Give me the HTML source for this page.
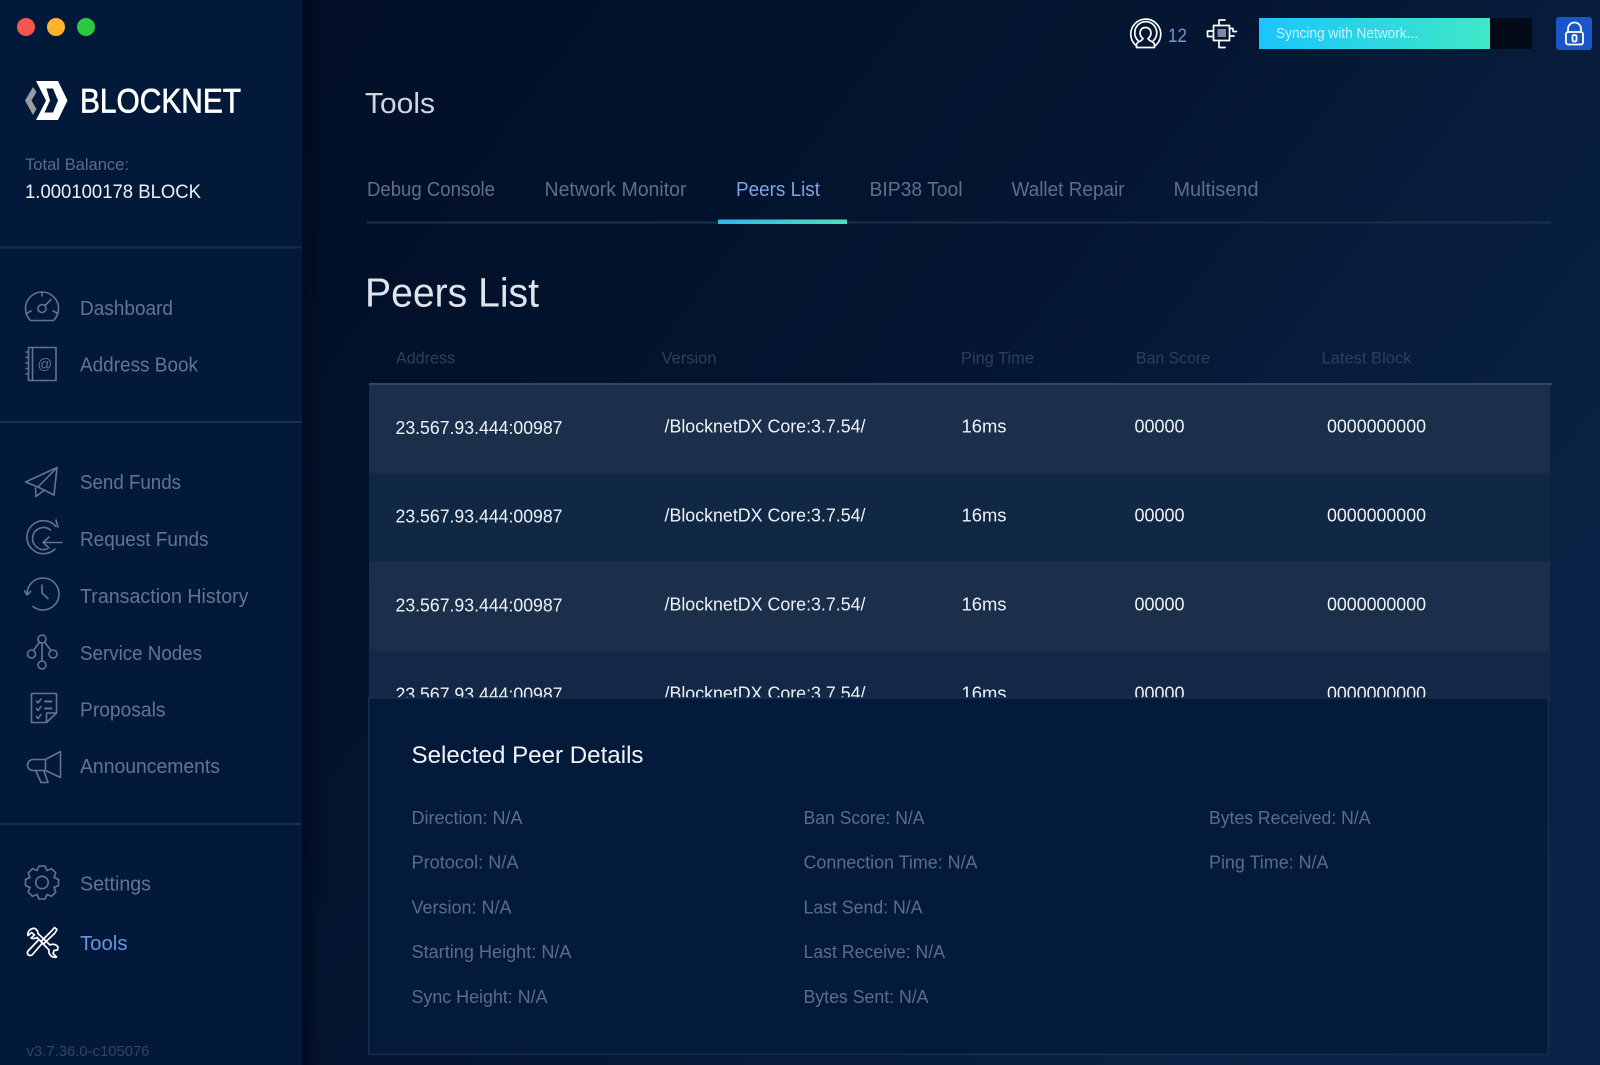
<!DOCTYPE html>
<html lang="en">
<head>
<meta charset="utf-8">
<title>Blocknet Peers List</title>
<style>
html,body{margin:0;padding:0;width:1600px;height:1065px;overflow:hidden;background:#020f28}
svg{display:block}
text{font-family:"Liberation Sans",sans-serif;white-space:pre}
.nav{font-size:20px;fill:#64748f}
.tab{font-size:20px;fill:#5f6e8a}
.th{font-size:16.5px;fill:#2f3f5b}
.td{font-size:18.5px;fill:#edf2f8}
.d{font-size:18.5px;fill:#5c6c88}
.i{fill:none;stroke:#64748f;stroke-width:1.6;stroke-linejoin:round;stroke-linecap:round}
.w{fill:none;stroke:#fff;stroke-width:1.7;stroke-linejoin:round;stroke-linecap:round}
</style>
</head>
<body>
<svg width="1600" height="1065" viewBox="0 0 1600 1065" xmlns="http://www.w3.org/2000/svg">
<defs>
<linearGradient id="bg" gradientUnits="userSpaceOnUse" x1="320" y1="60" x2="1560" y2="1000">
<stop offset="0" stop-color="#020f27"/><stop offset=".45" stop-color="#041632"/><stop offset=".8" stop-color="#0a2144"/><stop offset="1" stop-color="#0c2348"/>
</linearGradient>
<linearGradient id="sh" x1="0" x2="1" y1="0" y2="0">
<stop offset="0" stop-color="#000a1e" stop-opacity=".9"/><stop offset="1" stop-color="#000a1e" stop-opacity="0"/>
</linearGradient>
<linearGradient id="bar" gradientUnits="userSpaceOnUse" x1="1259" y1="0" x2="1490" y2="0">
<stop offset="0" stop-color="#1ac5fd"/><stop offset="1" stop-color="#3fe8c6"/>
</linearGradient>
<linearGradient id="ul" gradientUnits="userSpaceOnUse" x1="718" y1="0" x2="847" y2="0">
<stop offset="0" stop-color="#33b6ea"/><stop offset="1" stop-color="#4de0bd"/>
</linearGradient>
</defs>

<rect width="1600" height="1065" fill="url(#bg)"/>
<rect x="302" y="0" width="22" height="1065" fill="url(#sh)"/>
<rect x="0" y="0" width="302" height="1065" fill="#02193a"/>

<!-- traffic lights -->
<circle cx="26" cy="27" r="9" fill="#f5544f"/>
<circle cx="56" cy="27" r="9" fill="#fdb42c"/>
<circle cx="86" cy="27" r="9" fill="#2ec83f"/>

<!-- logo -->
<path d="M33 87 L36.5 92 L31.5 100.5 L36.5 109 L33 115 L25 100.5 Z" fill="#9b9ca2"/>
<path d="M36 81 H58 L67.5 100.5 L58 120 H36 L41 110.5 L46 100.5 L36 81 Z" fill="#fff"/>
<path d="M46.5 88.5 H53 L58 100.5 L53 112.5 H44.5 L50 100.5 Z" fill="#02193a"/>
<text x="80" y="112.5" font-size="34.5" fill="#fff" stroke="#fff" stroke-width=".7" textLength="161" lengthAdjust="spacingAndGlyphs">BLOCKNET</text>
<text x="25" y="170" font-size="16.5" fill="#5a6a88" textLength="104" lengthAdjust="spacingAndGlyphs">Total Balance:</text>
<text x="25" y="198" font-size="19.5" fill="#eef2f8" textLength="176" lengthAdjust="spacingAndGlyphs">1.000100178 BLOCK</text>

<rect x="0" y="246.5" width="302" height="2" fill="#16304f"/>
<rect x="0" y="421" width="302" height="2" fill="#16304f"/>
<rect x="0" y="823" width="302" height="2" fill="#16304f"/>

<!-- nav labels -->
<text class="nav" x="80" y="315" textLength="93" lengthAdjust="spacingAndGlyphs">Dashboard</text>
<text class="nav" x="80" y="371.5" textLength="118" lengthAdjust="spacingAndGlyphs">Address Book</text>
<text class="nav" x="80" y="489" textLength="101" lengthAdjust="spacingAndGlyphs">Send Funds</text>
<text class="nav" x="80" y="546" textLength="128.5" lengthAdjust="spacingAndGlyphs">Request Funds</text>
<text class="nav" x="80" y="603" textLength="168.5" lengthAdjust="spacingAndGlyphs">Transaction History</text>
<text class="nav" x="80" y="660" textLength="122" lengthAdjust="spacingAndGlyphs">Service Nodes</text>
<text class="nav" x="80" y="716.5" textLength="85.5" lengthAdjust="spacingAndGlyphs">Proposals</text>
<text class="nav" x="80" y="773" textLength="140" lengthAdjust="spacingAndGlyphs">Announcements</text>
<text class="nav" x="80" y="890.5" textLength="71" lengthAdjust="spacingAndGlyphs">Settings</text>
<text x="80" y="950" font-size="20" fill="#6a94e0" textLength="47.5" lengthAdjust="spacingAndGlyphs">Tools</text>
<text x="26.5" y="1056" font-size="15" fill="#33445f" textLength="123" lengthAdjust="spacingAndGlyphs">v3.7.36.0-c105076</text>

<!-- dashboard -->
<g class="i">
<path d="M30.5 320.5 C27 317 25.5 312.5 25.5 308.5 A16.5 16.5 0 0 1 58.5 308.5 C58.5 312.5 57 317 53.5 320.5 Z"/>
<circle cx="42" cy="308.5" r="4"/>
<path d="M45 305.5 L51 299.5 M42 292 V296 M27 313 L31 311 M57 313 L53 311"/>
</g>
<!-- address book -->
<g class="i">
<rect x="28.5" y="347.5" width="27.5" height="33"/>
<path d="M32.5 347.5 V380.5 M26 352 H28.5 M26 357.5 H28.5 M26 363 H28.5 M26 368.5 H28.5 M26 374 H28.5"/>
</g>
<text x="37.5" y="369" font-size="14.5" fill="#64748f">@</text>
<!-- send -->
<g class="i">
<path d="M25.5 482 L57 467.5 L54 495 L38 487 Z"/>
<path d="M38 487 L57 467.5 M35.5 488 L36 496.5 L44.5 490"/>
</g>
<!-- request -->
<g class="i">
<path d="M56 526.5 A16.5 16.5 0 1 0 55 549"/>
<path d="M50.5 530 A11 11 0 1 0 47 549"/>
<path d="M62 542.5 H43 M49 537 L43 542.5 L49 548"/>
<path d="M56 520 L58 527"/>
</g>
<!-- history -->
<g class="i">
<path d="M27 594 A16 16 0 1 1 43 610 A16 16 0 0 1 33 606.5"/>
<path d="M24.5 591 L27 595 L30.5 591.5"/>
<path d="M42 585 V593 L48 598.5"/>
</g>
<!-- nodes -->
<g class="i">
<circle cx="42" cy="639" r="4"/><circle cx="31.5" cy="654" r="4"/><circle cx="53" cy="654" r="4"/><circle cx="42" cy="665" r="4"/>
<path d="M42 643 V661 M39.5 642 L33.5 650.5 M44.5 642 L51 650.5"/>
</g>
<!-- proposals -->
<g class="i">
<path d="M31.5 693.5 H56.5 V713 L46.5 722.5 H31.5 Z"/>
<path d="M56.5 713 H46.5 V722.5"/>
<path d="M36.5 701 L38 703 L41 699 M36.5 708.5 L38 710.5 L41 706.5 M36.5 716.5 L38 718.5 L41 714.5"/>
<path d="M45 701.5 H51.5 M45 708.5 H51.5" stroke-width="2"/>
</g>
<!-- announcements -->
<g class="i">
<path d="M45.5 759.5 L60.5 751.5 V777.5 L45.5 770.5 H33 A5.5 5.5 0 0 1 33 759.5 Z"/>
<path d="M45.5 759.5 V770.5 M36 771 L41 782.5 H48 L44 771"/>
</g>
<!-- settings -->
<g class="i" transform="translate(42 882.5)">
<circle r="6.2"/>
<path d="M-5 -12 L-3 -16.5 H3 L5 -12"/>
<path transform="rotate(45)" d="M-5 -12 L-3 -16.5 H3 L5 -12"/>
<path transform="rotate(90)" d="M-5 -12 L-3 -16.5 H3 L5 -12"/>
<path transform="rotate(135)" d="M-5 -12 L-3 -16.5 H3 L5 -12"/>
<path transform="rotate(180)" d="M-5 -12 L-3 -16.5 H3 L5 -12"/>
<path transform="rotate(225)" d="M-5 -12 L-3 -16.5 H3 L5 -12"/>
<path transform="rotate(270)" d="M-5 -12 L-3 -16.5 H3 L5 -12"/>
<path transform="rotate(315)" d="M-5 -12 L-3 -16.5 H3 L5 -12"/>
</g>
<!-- tools -->
<g class="w">
<path d="M30.5 955.5 A2.8 2.8 0 0 1 28 951 L39 939.5 L42.5 943 L32.5 954.5 A2.8 2.8 0 0 1 30.5 955.5 Z"/>
<path d="M41 941.5 L52 930.5 L54.5 927.5 L57 929.5 L55 933 L43.5 944"/>
<path d="M35 928.5 A6 6 0 0 0 28 935.5 L31.5 932.5 L34.5 935 L31 938 A6.5 6.5 0 0 0 37 937.5 L49 950 A6 6 0 0 0 56.5 957 L53 953.5 L54 950.5 L57.5 950 L58 947 A6 6 0 0 0 50 945 L38 933.5 A6 6 0 0 0 35 928.5 Z"/>
</g>

<!-- top bar -->
<g class="w">
<path d="M1136 45.5 A15 15 0 1 1 1155.5 45.5"/>
<path d="M1138 40.5 A11 11 0 1 1 1153.5 40.5"/>
<path d="M1136.5 47.5 V44.5 C1136.5 41.5 1142 41.5 1143 38.5 C1140.5 36.5 1139.5 33.5 1140.5 30.5 C1142.5 26.5 1148.5 26.5 1150.5 30.5 C1151.5 33.5 1150.5 36.5 1148 38.5 C1149 41.5 1154.5 41.5 1154.5 44.5 V47.5 Z"/>
</g>
<text x="1168" y="42" font-size="19" fill="#7c92d8" textLength="19" lengthAdjust="spacingAndGlyphs">12</text>
<g class="w" stroke-width="2" stroke-linecap="butt" stroke-linejoin="miter">
<rect x="1213.5" y="25.5" width="16" height="15"/>
<path d="M1219 25.5 V20 H1225 M1213.5 31 H1207.5 V36.5 H1213.5 M1229.5 28.5 H1233 V31.5 H1236.5 M1229.5 36 H1234 M1219 40.5 V47.5 H1225"/>
</g>
<rect x="1217.5" y="29" width="8.5" height="8" fill="#7c8aa6"/>

<rect x="1259" y="18" width="231" height="31" fill="url(#bar)"/>
<rect x="1490" y="18" width="42" height="31" fill="#030a18"/>
<text x="1276" y="38" font-size="14.5" fill="#c6f3fb" textLength="142" lengthAdjust="spacingAndGlyphs">Syncing with Network...</text>

<rect x="1556" y="17" width="36" height="33" rx="3" fill="#1a56c9"/>
<g fill="none" stroke="#fff" stroke-width="1.8">
<path d="M1568 32 V29 A6.5 6.5 0 0 1 1581 29 V31"/>
<rect x="1566" y="32" width="17" height="12.5" rx="2"/>
<rect x="1572.5" y="35" width="4" height="6.5" rx="1.5"/>
</g>

<!-- headings -->
<text x="365" y="113" font-size="29" fill="#cfd6e2" textLength="70" lengthAdjust="spacingAndGlyphs">Tools</text>

<text class="tab" x="367" y="196" textLength="128" lengthAdjust="spacingAndGlyphs">Debug Console</text>
<text class="tab" x="544.5" y="196" textLength="142" lengthAdjust="spacingAndGlyphs">Network Monitor</text>
<text x="736" y="196" font-size="20" fill="#7fa3e8" textLength="84" lengthAdjust="spacingAndGlyphs">Peers List</text>
<text class="tab" x="869.5" y="196" textLength="93" lengthAdjust="spacingAndGlyphs">BIP38 Tool</text>
<text class="tab" x="1011.5" y="196" textLength="113" lengthAdjust="spacingAndGlyphs">Wallet Repair</text>
<text class="tab" x="1173.5" y="196" textLength="85" lengthAdjust="spacingAndGlyphs">Multisend</text>

<rect x="367" y="221.5" width="1184" height="2" fill="#1b3049"/>
<rect x="718" y="219.5" width="129" height="4.5" fill="url(#ul)"/>

<text x="365" y="306.5" font-size="41" fill="#dfe4ec" textLength="174" lengthAdjust="spacingAndGlyphs">Peers List</text>

<!-- table header -->
<text class="th" x="396" y="363.5" textLength="59" lengthAdjust="spacingAndGlyphs">Address</text>
<text class="th" x="661.5" y="363.5" textLength="55" lengthAdjust="spacingAndGlyphs">Version</text>
<text class="th" x="961" y="363.5" textLength="73" lengthAdjust="spacingAndGlyphs">Ping Time</text>
<text class="th" x="1136" y="363.5" textLength="74" lengthAdjust="spacingAndGlyphs">Ban Score</text>
<text class="th" x="1321.5" y="363.5" textLength="90" lengthAdjust="spacingAndGlyphs">Latest Block</text>

<!-- rows -->
<rect x="369" y="383" width="1183" height="2" fill="#33465f"/>
<rect x="369" y="385" width="1181" height="88" fill="#1b2f4a"/>
<rect x="369" y="473" width="1181" height="89" fill="#112845"/>
<rect x="369" y="562" width="1181" height="89" fill="#1b2f4a"/>
<rect x="369" y="651" width="1181" height="50" fill="#122846"/>

<g class="td">
<text x="395.5" y="434" textLength="167" lengthAdjust="spacingAndGlyphs">23.567.93.444:00987</text>
<text x="664.5" y="432.5" textLength="201" lengthAdjust="spacingAndGlyphs">/BlocknetDX Core:3.7.54/</text>
<text x="961.5" y="432.5" textLength="45" lengthAdjust="spacingAndGlyphs">16ms</text>
<text x="1134.5" y="432.5" textLength="50" lengthAdjust="spacingAndGlyphs">00000</text>
<text x="1327" y="432.5" textLength="99" lengthAdjust="spacingAndGlyphs">0000000000</text>

<text x="395.5" y="522.5" textLength="167" lengthAdjust="spacingAndGlyphs">23.567.93.444:00987</text>
<text x="664.5" y="521.5" textLength="201" lengthAdjust="spacingAndGlyphs">/BlocknetDX Core:3.7.54/</text>
<text x="961.5" y="521.5" textLength="45" lengthAdjust="spacingAndGlyphs">16ms</text>
<text x="1134.5" y="521.5" textLength="50" lengthAdjust="spacingAndGlyphs">00000</text>
<text x="1327" y="521.5" textLength="99" lengthAdjust="spacingAndGlyphs">0000000000</text>

<text x="395.5" y="611.5" textLength="167" lengthAdjust="spacingAndGlyphs">23.567.93.444:00987</text>
<text x="664.5" y="610.5" textLength="201" lengthAdjust="spacingAndGlyphs">/BlocknetDX Core:3.7.54/</text>
<text x="961.5" y="610.5" textLength="45" lengthAdjust="spacingAndGlyphs">16ms</text>
<text x="1134.5" y="610.5" textLength="50" lengthAdjust="spacingAndGlyphs">00000</text>
<text x="1327" y="610.5" textLength="99" lengthAdjust="spacingAndGlyphs">0000000000</text>

<text x="395.5" y="700.5" textLength="167" lengthAdjust="spacingAndGlyphs">23.567.93.444:00987</text>
<text x="664.5" y="699.5" textLength="201" lengthAdjust="spacingAndGlyphs">/BlocknetDX Core:3.7.54/</text>
<text x="961.5" y="699.5" textLength="45" lengthAdjust="spacingAndGlyphs">16ms</text>
<text x="1134.5" y="699.5" textLength="50" lengthAdjust="spacingAndGlyphs">00000</text>
<text x="1327" y="699.5" textLength="99" lengthAdjust="spacingAndGlyphs">0000000000</text>
</g>

<!-- details panel -->
<rect x="368.75" y="698" width="1179.5" height="356.25" fill="#031a3b" stroke="#182c4b" stroke-width="1.5"/>
<text x="411.5" y="763" font-size="24" fill="#f0f3f8" textLength="232" lengthAdjust="spacingAndGlyphs">Selected Peer Details</text>

<g class="d">
<text x="411.5" y="824" textLength="111" lengthAdjust="spacingAndGlyphs">Direction: N/A</text>
<text x="411.5" y="868.5" textLength="107" lengthAdjust="spacingAndGlyphs">Protocol: N/A</text>
<text x="411.5" y="913.5" textLength="100" lengthAdjust="spacingAndGlyphs">Version: N/A</text>
<text x="411.5" y="958" textLength="160" lengthAdjust="spacingAndGlyphs">Starting Height: N/A</text>
<text x="411.5" y="1003" textLength="136" lengthAdjust="spacingAndGlyphs">Sync Height: N/A</text>
<text x="803.5" y="824" textLength="121" lengthAdjust="spacingAndGlyphs">Ban Score: N/A</text>
<text x="803.5" y="868.5" textLength="174" lengthAdjust="spacingAndGlyphs">Connection Time: N/A</text>
<text x="803.5" y="913.5" textLength="119" lengthAdjust="spacingAndGlyphs">Last Send: N/A</text>
<text x="803.5" y="958" textLength="141.5" lengthAdjust="spacingAndGlyphs">Last Receive: N/A</text>
<text x="803.5" y="1003" textLength="125" lengthAdjust="spacingAndGlyphs">Bytes Sent: N/A</text>
<text x="1209" y="824" textLength="161.5" lengthAdjust="spacingAndGlyphs">Bytes Received: N/A</text>
<text x="1209" y="868.5" textLength="119.5" lengthAdjust="spacingAndGlyphs">Ping Time: N/A</text>
</g>
</svg>
</body>
</html>
